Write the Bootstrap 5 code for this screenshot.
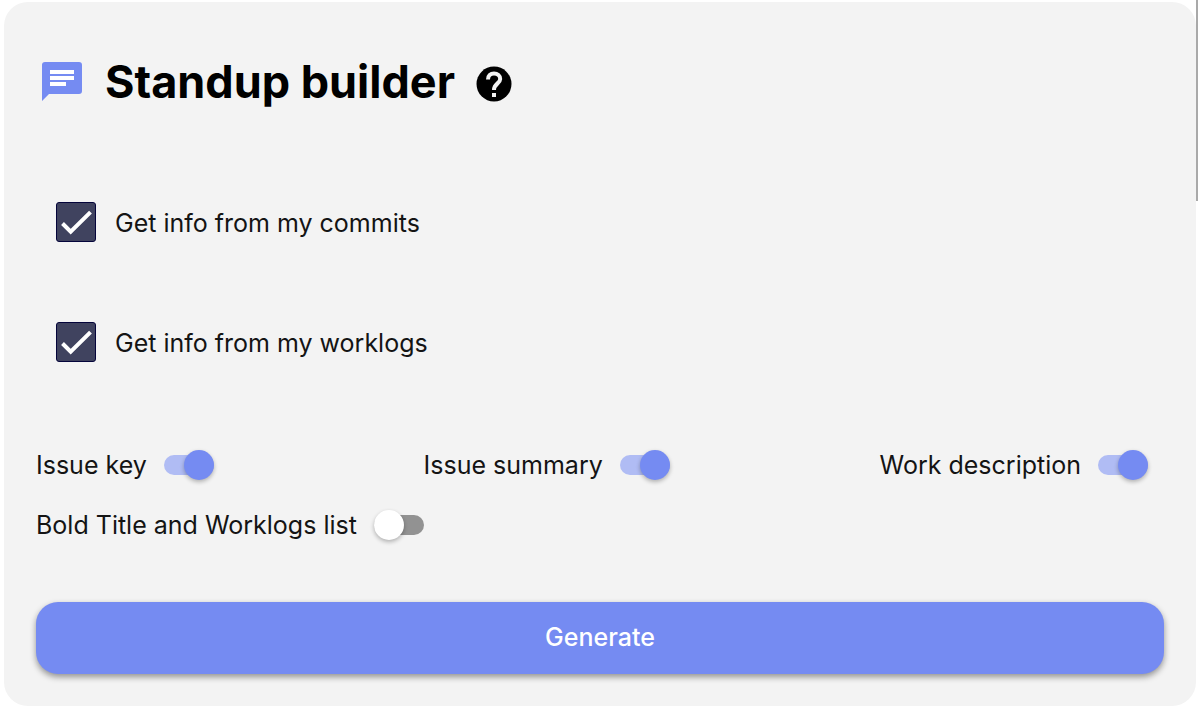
<!DOCTYPE html>
<html lang="en">
<head>
<meta charset="utf-8">
<meta name="viewport" content="width=device-width, initial-scale=1">
<title>Standup builder</title>
<link href="https://cdn.jsdelivr.net/npm/bootstrap@5.3.0/dist/css/bootstrap.min.css" rel="stylesheet">
<script src="https://cdn.jsdelivr.net/npm/bootstrap@5.3.0/dist/js/bootstrap.bundle.min.js" defer></script>
<style>
  :root { --accent: #758bf2; }
  body { font-family: Inter, "Liberation Sans", sans-serif; font-size: 25px; line-height: 36px; color: #141414; background: #fff; }
  .builder { margin: 2px 2px 6px 4px; padding: 52px 32px 32px; background: #f3f3f3; border-radius: 24px; }
  .title-row { gap: 21px; padding-left: 4px; }
  .title-row h1 { font-size: 45px; line-height: 56px; font-weight: 700; color: #000; }
  .sources { margin-top: 72px; gap: 40px; padding-left: 20px; }
  .source { gap: 19px; height: 80px; }
  .source label { padding-top: 2px; }
  .source .form-check-input { width: 40px; height: 40px; border: 1px solid #04043a; border-radius: 3px; }
  .source .form-check-input:checked { background-color: #40435f; background-size: 100% 100%; background-image: url("data:image/svg+xml,%3Csvg xmlns='http://www.w3.org/2000/svg' viewBox='0 0 38 38'%3E%3Cpath d='M5.500 20.500 13.700 28.700 33.500 9.200' fill='none' stroke='%23fff' stroke-width='4'/%3E%3C/svg%3E"); }
  .toggles { margin-top: 53px; }
  .toggle { gap: 17px; height: 60px; padding-right: 16px; }
  .slide { appearance: none; position: relative; width: 50px; height: 30px; margin: 0; }
  .slide::before { content: ""; position: absolute; inset: 5px 0; border-radius: 10px; background: #929292; }
  .slide::after { content: ""; position: absolute; left: 0; top: 0; width: 30px; height: 30px; border-radius: 50%; background: #fff; box-shadow: 0 2px 4px rgba(0,0,0,.28); }
  .slide:checked::before { background: #b0bcf4; }
  .slide:checked::after { left: auto; right: 0; background: var(--accent); }
  .generate { margin-top: 47px; height: 72px; padding: 0; border: 0; border-radius: 22px; font-size: 25px; font-weight: 500; color: #fff; background: var(--accent); box-shadow: 0 3px 6px rgba(0,0,0,.4); }
  .generate:hover { color: #fff; background: #6a80e6; }
  .scroll-thumb { top: 0; right: 0; width: 2px; height: 201px; background: #a9a9a9; }
</style>
</head>
<body>
<main class="builder">
  <header class="title-row d-flex align-items-center">
    <svg width="44" height="44" viewBox="0 0 44 44" aria-hidden="true">
      <path d="M5 2H39Q42 2 42 5V31Q42 34 39 34H9L2 41V5Q2 2 5 2Z" fill="#758bf2"/>
      <path d="M10 12H34M10 18H34M10 24H26" stroke="#fff" stroke-width="4"/>
    </svg>
    <h1 class="m-0">Standup builder</h1>
    <svg class="mt-1" width="36" height="36" viewBox="0 0 36 36" role="img" aria-label="Help">
      <circle cx="18" cy="18" r="17.500" fill="#000"/>
      <path d="M12 13.500C12 9.500 14.500 7.500 18 7.500S24.200 9.800 24.200 13C24.200 17.500 18 17.500 18 24" fill="none" stroke="#f3f3f3" stroke-width="4"/>
      <path d="M16 27H20V31H16Z" fill="#f3f3f3"/>
    </svg>
  </header>
  <div class="sources d-flex flex-column">
    <div class="source d-flex align-items-center">
      <input class="form-check-input m-0" type="checkbox" id="commits" checked>
      <label for="commits">Get info from my commits</label>
    </div>
    <div class="source d-flex align-items-center">
      <input class="form-check-input m-0" type="checkbox" id="worklogs" checked>
      <label for="worklogs">Get info from my worklogs</label>
    </div>
  </div>
  <div class="toggles d-flex flex-wrap justify-content-between">
    <div class="toggle d-flex align-items-center"><label for="key">Issue key</label><input class="slide" type="checkbox" role="switch" id="key" checked></div>
    <div class="toggle d-flex align-items-center"><label for="summary">Issue summary</label><input class="slide" type="checkbox" role="switch" id="summary" checked></div>
    <div class="toggle d-flex align-items-center"><label for="description">Work description</label><input class="slide" type="checkbox" role="switch" id="description" checked></div>
    <div class="toggle d-flex align-items-center"><label for="bold">Bold Title and Worklogs list</label><input class="slide" type="checkbox" role="switch" id="bold"></div>
  </div>
  <button class="generate btn w-100" type="button">Generate</button>
</main>
<div class="scroll-thumb position-absolute"></div>
</body>
</html>
